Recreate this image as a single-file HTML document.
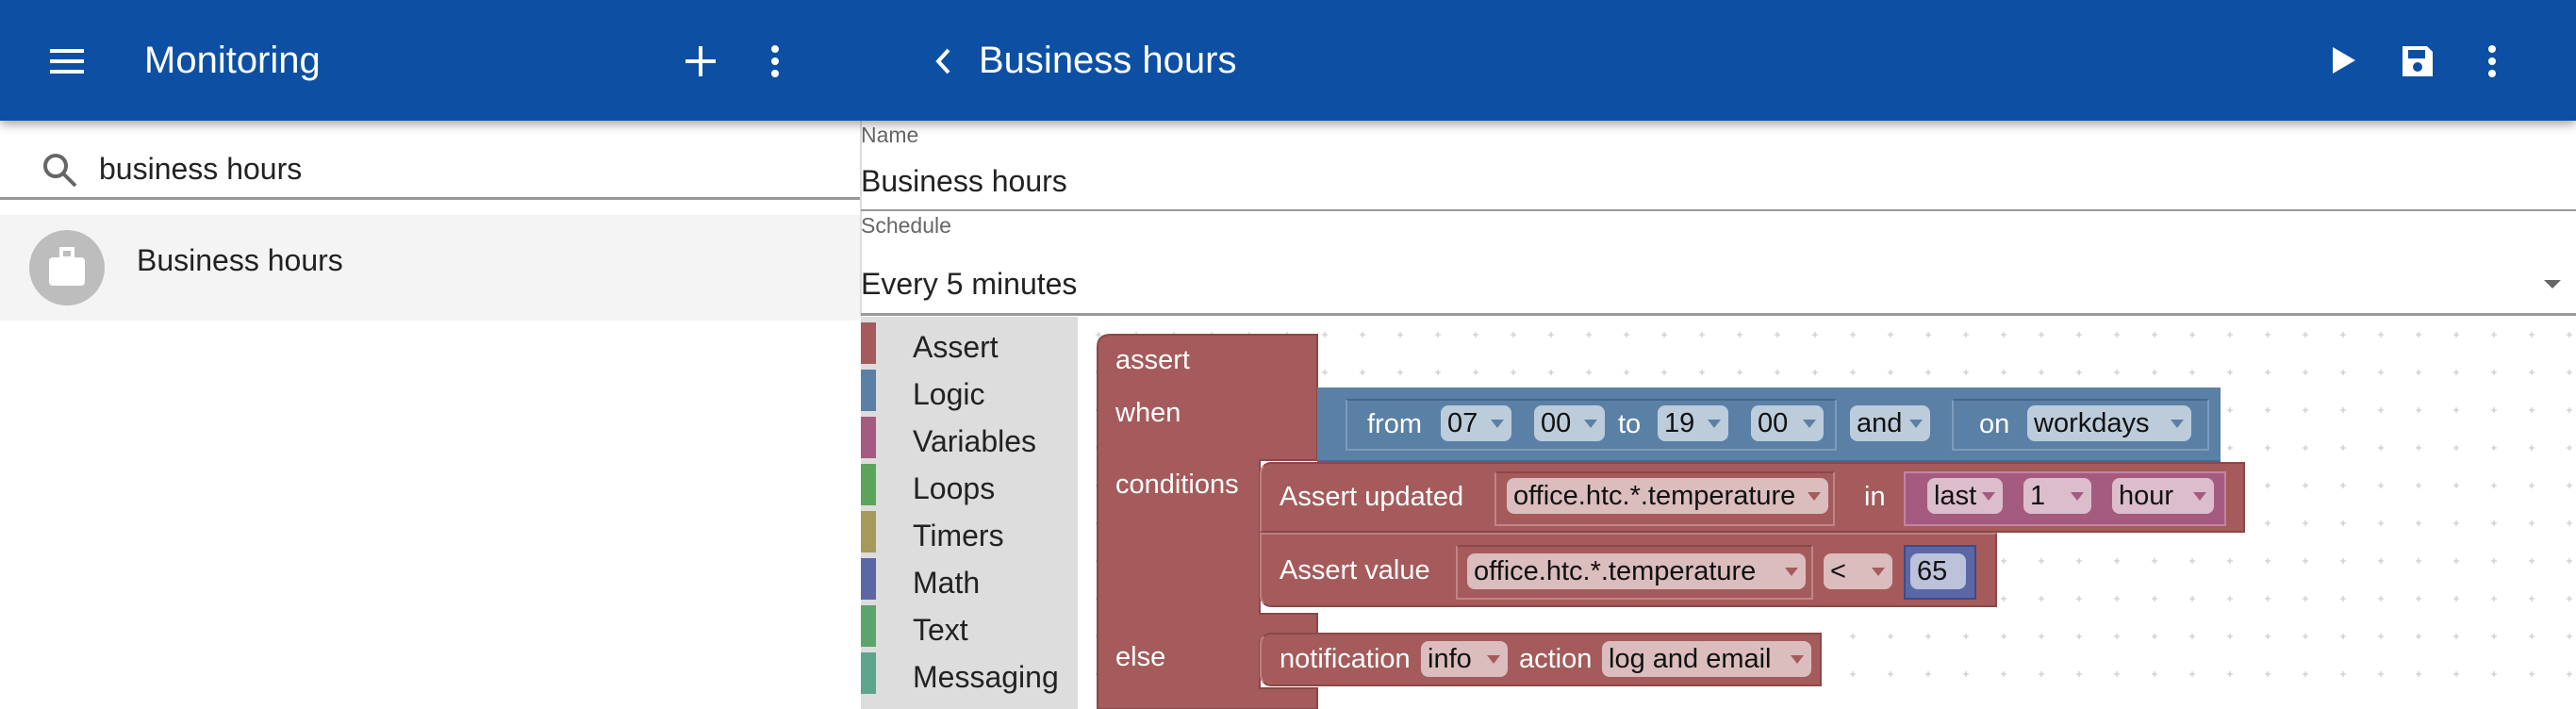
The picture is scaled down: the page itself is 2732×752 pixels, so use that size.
<!DOCTYPE html>
<html><head><meta charset="utf-8"><style>
*{margin:0;padding:0;box-sizing:border-box}
body{width:2732px;height:752px;overflow:hidden;background:#fff;font-family:"Liberation Sans",sans-serif;position:relative}
.a{position:absolute;white-space:nowrap}
.hdr{left:0;top:0;width:2732px;height:128px;background:#0d50a3;box-shadow:0 4px 10px rgba(0,0,0,.35);z-index:5}
.ht{color:#fff;font-size:40px;line-height:46px}
.t{font-size:32px;color:#222;line-height:36px}
.lbl{font-size:23px;color:#666;line-height:26px}
.cat{left:913px;width:16px;height:44px}
.cl{left:968px;font-size:32px;color:#222;line-height:44px}
.blk{position:absolute}
.w{color:#fff;font-size:29px;line-height:34px;position:absolute;white-space:nowrap}
.f{position:absolute;border-radius:8px;font-size:29px;line-height:38px;color:#111;padding-left:7px;white-space:nowrap}
.f i{position:absolute;right:8px;top:15px;width:0;height:0;border-left:7px solid transparent;border-right:7px solid transparent;border-top:9px solid}
</style></head><body>
<div class="a hdr">
 <svg class="a" style="left:53px;top:52px" width="36" height="26"><rect y="0" width="36" height="4" fill="#fff"/><rect y="11" width="36" height="4" fill="#fff"/><rect y="22" width="36" height="4" fill="#fff"/></svg>
 <div class="a ht" style="left:153px;top:41px">Monitoring</div>
 <svg class="a" style="left:727px;top:49px" width="32" height="32"><rect x="14" y="0" width="4" height="32" fill="#fff"/><rect x="0" y="14" width="32" height="4" fill="#fff"/></svg>
 <svg class="a" style="left:816px;top:47px" width="12" height="36"><circle cx="6" cy="5" r="4" fill="#fff"/><circle cx="6" cy="18" r="4" fill="#fff"/><circle cx="6" cy="31" r="4" fill="#fff"/></svg>
 <svg class="a" style="left:990px;top:50px" width="20" height="30"><path d="M16 3 L5 15 L16 27" stroke="#fff" stroke-width="4" fill="none"/></svg>
 <div class="a ht" style="left:1038px;top:41px">Business hours</div>
 <svg class="a" style="left:2472px;top:48px" width="28" height="32"><path d="M2 2 L26 16 L2 30Z" fill="#fff"/></svg>
 <svg class="a" style="left:2545px;top:46px" width="38" height="38"><path d="M3 3 H29 L35 9 V35 H3Z" fill="#fff"/><rect x="9" y="7" width="18" height="9" fill="#0d50a3"/><circle cx="19" cy="25" r="5" fill="#0d50a3"/></svg>
 <svg class="a" style="left:2637px;top:47px" width="12" height="36"><circle cx="6" cy="5" r="4" fill="#fff"/><circle cx="6" cy="18" r="4" fill="#fff"/><circle cx="6" cy="31" r="4" fill="#fff"/></svg>
</div>
<!-- left -->
<svg class="a" style="left:44px;top:161px" width="40" height="40"><circle cx="15" cy="15" r="11" stroke="#666" stroke-width="4" fill="none"/><path d="M23 23 L36 36" stroke="#666" stroke-width="4"/></svg>
<div class="a t" style="left:105px;top:161px">business hours</div>
<div class="a" style="left:0;top:209px;width:912px;height:3px;background:#999"></div>
<div class="a" style="left:0;top:228px;width:912px;height:112px;background:#f4f4f4"></div>
<div class="a" style="left:31px;top:244px;width:80px;height:80px;border-radius:40px;background:#bdbdbd"></div>
<svg class="a" style="left:51px;top:262px" width="40" height="44"><rect x="14" y="2" width="12" height="10" fill="none" stroke="#fff" stroke-width="4"/><rect x="1" y="11" width="38" height="30" rx="4" fill="#fff"/></svg>
<div class="a t" style="left:145px;top:258px">Business hours</div>
<!-- right form -->
<div class="a" style="left:912px;top:128px;width:2px;height:208px;background:#ddd"></div>
<div class="a lbl" style="left:913px;top:130px">Name</div>
<div class="a t" style="left:913px;top:174px">Business hours</div>
<div class="a" style="left:913px;top:222px;width:1819px;height:2px;background:#999"></div>
<div class="a lbl" style="left:913px;top:226px">Schedule</div>
<div class="a t" style="left:913px;top:283px">Every 5 minutes</div>
<div class="a" style="left:2698px;top:297px;border-left:9px solid transparent;border-right:9px solid transparent;border-top:9px solid #666"></div>
<div class="a" style="left:913px;top:332px;width:1819px;height:3px;background:#999"></div>
<!-- workspace -->
<svg class="a" style="left:1143px;top:336px" width="1589" height="416">
<defs><pattern id="g" x="19" y="9" width="40" height="40" patternUnits="userSpaceOnUse"><path d="M0 10 H6 M3 7 V13" stroke="#ccc" stroke-width="1.3"/></pattern></defs>
<rect width="1589" height="416" fill="url(#g)"/></svg>
<div class="a" style="left:913px;top:336px;width:230px;height:416px;background:#ddd"></div>
<div class="a cat" style="top:342px;background:#a55b5b"></div><div class="a cl" style="top:346px">Assert</div>
<div class="a cat" style="top:392px;background:#5b80a5"></div><div class="a cl" style="top:396px">Logic</div>
<div class="a cat" style="top:442px;background:#a55b80"></div><div class="a cl" style="top:446px">Variables</div>
<div class="a cat" style="top:492px;background:#5ba55b"></div><div class="a cl" style="top:496px">Loops</div>
<div class="a cat" style="top:542px;background:#a5995b"></div><div class="a cl" style="top:546px">Timers</div>
<div class="a cat" style="top:592px;background:#5b67a5"></div><div class="a cl" style="top:596px">Math</div>
<div class="a cat" style="top:642px;background:#5ba56d"></div><div class="a cl" style="top:646px">Text</div>
<div class="a cat" style="top:692px;background:#5ba58c"></div><div class="a cl" style="top:696px">Messaging</div>
<!-- assert block C shape -->
<svg class="a" style="left:1160px;top:350px" width="250" height="402">
<path d="M4 18 Q4 5 18 5 H237 V138 H176 V301 H237 V330 H176 V380 H237 V402 H4Z" fill="#a55b5b" stroke="#8a4848" stroke-width="2"/>
</svg>
<div class="w" style="left:1183px;top:365px">assert</div>
<div class="w" style="left:1183px;top:421px">when</div>
<div class="w" style="left:1183px;top:497px">conditions</div>
<div class="w" style="left:1183px;top:680px">else</div>
<!-- logic block -->
<div class="blk" style="left:1397px;top:411px;width:958px;height:79px;background:#5b80a5;border-bottom:2px solid #486a8c"></div>
<div class="blk" style="left:1427px;top:423px;width:521px;height:55px;border:2px solid #7d9cbd;border-top-color:#45678a"></div>
<div class="blk" style="left:2070px;top:423px;width:273px;height:55px;border:2px solid #7d9cbd;border-top-color:#45678a"></div>
<div class="w" style="left:1450px;top:433px">from</div>
<div class="f" style="left:1528px;top:430px;width:75px;background:#bdccdb">07<i style="color:#5b80a5"></i></div>
<div class="f" style="left:1627px;top:430px;width:75px;background:#bdccdb">00<i style="color:#5b80a5"></i></div>
<div class="w" style="left:1716px;top:433px">to</div>
<div class="f" style="left:1758px;top:430px;width:75px;background:#bdccdb">19<i style="color:#5b80a5"></i></div>
<div class="f" style="left:1857px;top:430px;width:77px;background:#bdccdb">00<i style="color:#5b80a5"></i></div>
<div class="f" style="left:1962px;top:430px;width:85px;background:#bdccdb">and<i style="color:#5b80a5"></i></div>
<div class="w" style="left:2099px;top:433px">on</div>
<div class="f" style="left:2150px;top:430px;width:174px;background:#bdccdb">workdays<i style="color:#5b80a5"></i></div>
<!-- assert updated -->
<div class="blk" style="left:1336px;top:490px;width:1045px;height:75px;background:#a55b5b;border:2px solid #8a4848;border-left-color:#c08080;border-radius:12px 0 0 0"></div>
<div class="w" style="left:1357px;top:510px">Assert updated</div>
<div class="blk" style="left:1585px;top:500px;width:361px;height:58px;border:2px solid #c38585;border-top-color:#8a4848"></div>
<div class="f" style="left:1598px;top:507px;width:341px;background:#dbbdbd">office.htc.*.temperature<i style="color:#a55b5b"></i></div>
<div class="w" style="left:1977px;top:510px">in</div>
<div class="blk" style="left:2019px;top:500px;width:342px;height:58px;background:#a55b80;border:2px solid #c383a3"></div>
<div class="f" style="left:2044px;top:507px;width:80px;background:#dbbdcc">last<i style="color:#a55b80"></i></div>
<div class="f" style="left:2146px;top:507px;width:72px;background:#dbbdcc">1<i style="color:#a55b80"></i></div>
<div class="f" style="left:2240px;top:507px;width:108px;background:#dbbdcc">hour<i style="color:#a55b80"></i></div>
<!-- assert value -->
<div class="blk" style="left:1336px;top:565px;width:782px;height:79px;background:#a55b5b;border:2px solid #8a4848;border-left-color:#c08080;border-top-color:#c08080;border-radius:0 0 0 12px"></div>
<div class="w" style="left:1357px;top:588px">Assert value</div>
<div class="blk" style="left:1544px;top:578px;width:379px;height:58px;border:2px solid #c38585;border-top-color:#8a4848"></div>
<div class="f" style="left:1556px;top:587px;width:359px;background:#dbbdbd">office.htc.*.temperature<i style="color:#a55b5b"></i></div>
<div class="f" style="left:1934px;top:587px;width:73px;background:#dbbdbd">&lt;<i style="color:#a55b5b"></i></div>
<div class="blk" style="left:2019px;top:578px;width:77px;height:58px;background:#5b67a5;border:2px solid #3f4a85"></div>
<div class="f" style="left:2026px;top:587px;width:59px;background:#bdc2db">65</div>
<!-- notification -->
<div class="blk" style="left:1336px;top:671px;width:596px;height:57px;background:#a55b5b;border:2px solid #8a4848;border-left-color:#c08080;border-radius:12px 0 0 12px"></div>
<div class="w" style="left:1357px;top:682px">notification</div>
<div class="f" style="left:1507px;top:680px;width:92px;background:#dbbdbd">info<i style="color:#a55b5b"></i></div>
<div class="w" style="left:1611px;top:682px">action</div>
<div class="f" style="left:1699px;top:680px;width:222px;background:#dbbdbd">log and email<i style="color:#a55b5b"></i></div>
</body></html>
